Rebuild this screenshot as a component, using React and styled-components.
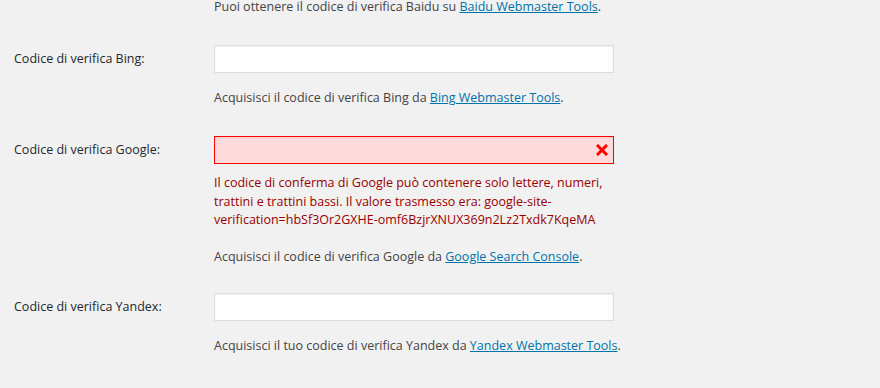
import React from 'react';
import styled, {createGlobalStyle} from 'styled-components';

const Global = createGlobalStyle`
  html, body {
    margin: 0;
    background: #f1f1f1;
    font-family: "Open Sans", "Noto Sans", sans-serif;
    font-size: 12.5px;
    color: #444;
  }
`;

const Page = styled.div`
  padding-left: 14px;
  margin-top: -2px;
  width: 866px;
  height: 390px;
  overflow: hidden;
`;

const Row = styled.div`
  display: grid;
  grid-template-columns: 200px 1fr;
  padding-top: ${p => p.$gap ?? 29}px;
`;

const Label = styled.label`
  color: #23282d;
  line-height: 28px;
`;

const Field = styled.div`
  grid-column: 2;
  display: flex;
  flex-direction: column;
  align-items: flex-start;
`;

const InputWrap = styled.div`
  position: relative;
  width: 400px;
  height: 28px;
`;

const Input = styled.input`
  box-sizing: border-box;
  width: 100%;
  height: 28px;
  margin: 0;
  padding: 3px 30px 3px 5px;
  font: inherit;
  background: ${p => (p.$invalid ? '#ffdbdb' : '#fff')};
  border: 1px solid ${p => (p.$invalid ? '#f00' : '#ddd')};
  box-shadow: inset 0 1px 2px rgba(0, 0, 0, 0.07);
  outline: none;
`;

const ErrorIcon = styled.svg`
  position: absolute;
  right: 6px;
  top: 8px;
  width: 12px;
  height: 12px;
`;

const Desc = styled.p`
  margin: ${p => p.$top ?? 16}px 0 0;
  line-height: 18px;
`;

const ErrorText = styled.p`
  margin: 10px 0 0;
  width: 404px;
  color: #900;
  line-height: 18.5px;
`;

const Link = styled.a`
  color: #0073aa;
  text-decoration: underline;
`;

const Cross = () => (
  <ErrorIcon viewBox="0 0 12 12">
    <path d="M2 2 L10 10 M10 2 L2 10" stroke="#f00" strokeWidth="3" strokeLinecap="square" />
  </ErrorIcon>
);

const VerifyRow = ({label, invalid, error, children, descTop, gap}) => (
  <Row $gap={gap}>
    <Label>{label}</Label>
    <Field>
      <InputWrap>
        <Input type="text" $invalid={invalid} />
        {invalid && <Cross />}
      </InputWrap>
      {error && <ErrorText>{error}</ErrorText>}
      <Desc $top={descTop}>{children}</Desc>
    </Field>
  </Row>
);

export default function App() {
  return (
    <>
      <Global />
      <Page>
        <Row $gap={0}>
          <Field>
            <Desc $top={0}>
              Puoi ottenere il codice di verifica Baidu su <Link href="#">Baidu Webmaster Tools</Link>.
            </Desc>
          </Field>
        </Row>
        <VerifyRow label="Codice di verifica Bing:">
          Acquisisci il codice di verifica Bing da <Link href="#">Bing Webmaster Tools</Link>.
        </VerifyRow>
        <VerifyRow
          label="Codice di verifica Google:"
          invalid
          descTop={18}
          error="Il codice di conferma di Google può contenere solo lettere, numeri, trattini e trattini bassi. Il valore trasmesso era: google-site-verification=hbSf3Or2GXHE-omf6BzjrXNUX369n2Lz2Txdk7KqeMA"
        >
          Acquisisci il codice di verifica Google da <Link href="#">Google Search Console</Link>.
        </VerifyRow>
        <VerifyRow label="Codice di verifica Yandex:" gap={27}>
          Acquisisci il tuo codice di verifica Yandex da <Link href="#">Yandex Webmaster Tools</Link>.
        </VerifyRow>
      </Page>
    </>
  );
}
